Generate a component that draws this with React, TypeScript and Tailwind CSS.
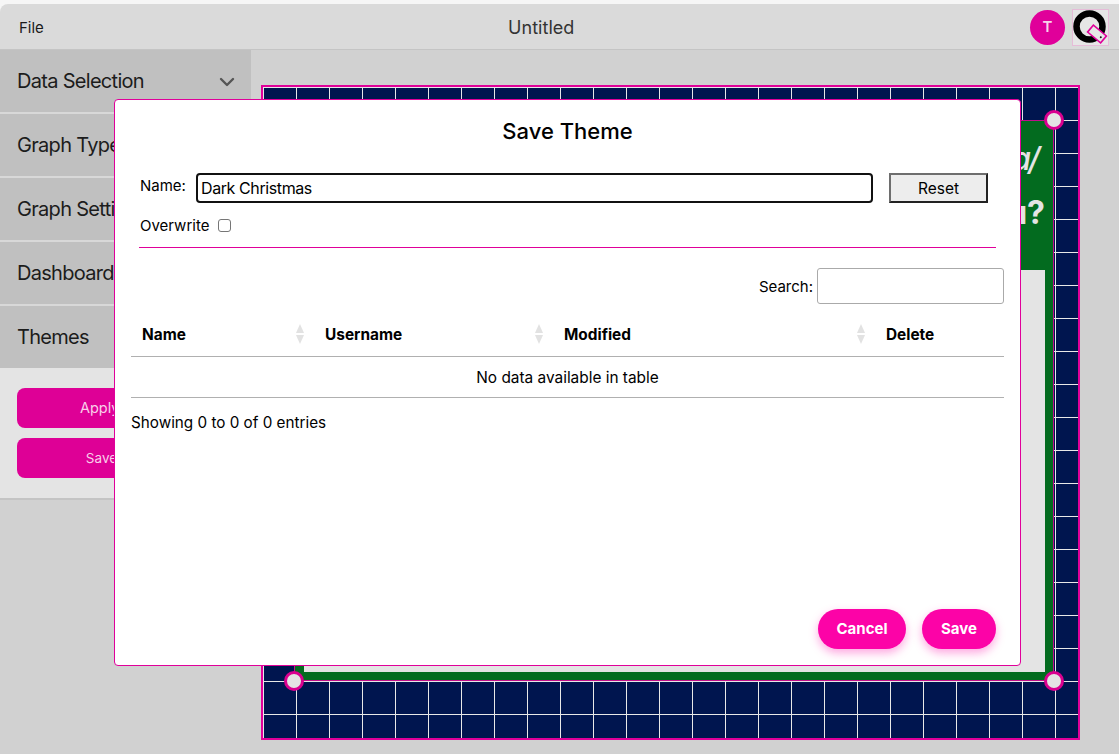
import React from "react";
import { ChevronDown } from "lucide-react";

const sections = ["Data Selection", "Graph Type", "Graph Settings", "Dashboard", "Themes"];

const SortIcon = () => (
  <svg width="10" height="20" viewBox="0 0 10 20" className="shrink-0">
    <path d="M5 0L9 9H1Z" fill="#e2e2e2" />
    <path d="M5 20L1 11H9Z" fill="#e2e2e2" />
  </svg>
);

const Handle = ({ className }: { className: string }) => (
  <div className={`absolute w-[20px] h-[20px] rounded-full bg-[#e4e4e4] border-[3px] border-[#d9008f] ${className}`} />
);

const Logo = () => (
  <div className="w-[37px] h-[37px] bg-[#e6e6e6] border border-[#e6bcd8]">
    <svg width="35" height="35" viewBox="0 0 35 35">
      <circle cx="16.5" cy="16.5" r="13" fill="none" stroke="#000" strokeWidth="6.5" />
      <g transform="rotate(40 24 24)">
        <rect x="15.5" y="19.5" width="17" height="9" fill="#e6e6e6" stroke="#e0009a" strokeWidth="1.6" />
        <circle cx="29" cy="24" r="1" fill="#111" />
      </g>
    </svg>
  </div>
);

const Header = () => (
  <header className="relative h-[46px] flex items-center justify-between bg-[#dadada] border-b border-[#c4c4c4] rounded-tl-lg pl-[19px] pr-[10px] pt-[1px]">
    <span className="text-[15px] text-[#1a1a1a] mt-[2px]">File</span>
    <span className="absolute left-[508px] text-[18px] tracking-[0.05px] text-[#333]">Untitled</span>
    <div className="flex items-center gap-[7px]">
      <div className="w-[35px] h-[35px] rounded-full bg-[#e0009a] flex items-center justify-center text-[15px] font-semibold text-[#f6d5ea]">T</div>
      <Logo />
    </div>
  </header>
);

const Sidebar = () => (
  <aside className="w-[251px] shrink-0">
    <div className="flex flex-col gap-[2px] bg-[#d8d8d8]">
      {sections.map((s) => (
        <div key={s} className="h-[62px] bg-[#c0c0c0] flex items-center justify-between pl-[17px] pr-[12px] text-[20px] tracking-[-0.7px] text-[#1c1c1c]">
          <span>{s}</span>
          <ChevronDown size={24} strokeWidth={2.4} className="text-[#555] mt-[2px]" />
        </div>
      ))}
    </div>
    <div className="bg-[#e4e4e4] border-b-2 border-[#c4c4c4] h-[132px] px-[17px] pt-[20px] flex flex-col gap-[10px]">
      <button className="h-[40px] rounded-lg bg-[#de0096] text-[14.5px] text-[#f8cfe9]">Apply Theme</button>
      <button className="h-[40px] rounded-lg bg-[#de0096] text-[13.5px] text-[#f8cfe9]">Save Theme</button>
    </div>
  </aside>
);

const Canvas = () => (
  <div className="relative ml-[10px] mt-[35px] w-[819px] h-[655px] border-2 border-[#e0009a] bg-[#00154f] bg-[linear-gradient(to_right,#e8e8e8_1px,transparent_1px),linear-gradient(to_bottom,#e8e8e8_1px,transparent_1px)] bg-[size:33px_33px]">
    <div className="absolute left-[31px] top-[33px] w-[760px] h-[561px] border border-[#c0108a] bg-[#036b1f] flex flex-col pl-[9px] pr-[8px] pb-[8px]">
      <div className="h-[149px] shrink-0 flex flex-col items-end pt-[15px] text-[32px] leading-[46px] text-[#e4e4e4]">
        <span className="italic font-medium pr-[8px] tracking-[-3px]">a/</span>
        <span className="font-bold mt-[8px]">u?</span>
      </div>
      <div className="flex-1 bg-[#e4e4e4]" />
      <Handle className="-top-px -left-px -translate-x-1/2 -translate-y-1/2" />
      <Handle className="-top-px -right-px translate-x-1/2 -translate-y-1/2" />
      <Handle className="-bottom-px -left-px -translate-x-1/2 translate-y-1/2" />
      <Handle className="-bottom-px -right-px translate-x-1/2 translate-y-1/2" />
    </div>
  </div>
);

const SaveThemeModal = () => (
  <div className="absolute left-[114px] top-[99px] w-[907px] h-[567px] bg-white border border-[#e0009a] rounded-[4px] flex flex-col text-black">
    <h2 className="text-center text-[22px] font-medium leading-[28px] mt-[17px]">Save Theme</h2>
    <div className="ml-[24px] mr-[24px] mt-[28px]">
      <div className="flex items-center h-[30px]">
        <label className="text-[15px] w-[57px] -mt-[4px] pl-[1px]">Name:</label>
        <input readOnly value="Dark Christmas" className="w-[677px] h-[30px] border-2 border-[#111] rounded-[4px] px-[3px] text-[16px] tracking-[-0.4px] outline-none" />
        <button className="ml-[16px] w-[99px] h-[30px] pt-[1px] bg-[#ededed] border-2 border-t-[#6e6e6e] border-l-[#6e6e6e] border-r-[#222] border-b-[#222] text-[15.5px]">Reset</button>
      </div>
      <div className="flex items-center h-[22px] mt-[11px] text-[15px] pl-[1px]">
        <span className="mt-[2px]">Overwrite</span>
        <span className="ml-[9px] w-[13px] h-[13px] rounded-[3px] border border-[#767676] bg-white" />
      </div>
      <div className="h-px bg-[#e0009a] mt-[11px]" />
    </div>
    <div className="ml-[16px] mr-[16px] mt-[20px]">
      <div className="flex items-center justify-end text-[15px]">
        <span className="mr-[4px] mt-[2px]">Search:</span>
        <input readOnly className="w-[187px] h-[36px] border border-[#aaa] rounded-[3px] outline-none" />
      </div>
      <table className="w-[873px] table-fixed mt-[9px] text-[15.4px]">
        <thead>
          <tr className="border-b border-[#b0b0b0] h-[43px]">
            {[
              ["Name", "w-[183px]"],
              ["Username", "w-[239px]"],
              ["Modified", "w-[322px]"],
            ].map(([label, w]) => (
              <th key={label} className={`${w} pl-[11px] pr-[9px] text-left font-bold`}>
                <div className="flex items-center justify-between">
                  <span>{label}</span>
                  <SortIcon />
                </div>
              </th>
            ))}
            <th className="pl-[11px] text-left font-bold">Delete</th>
          </tr>
        </thead>
        <tbody>
          <tr className="border-b border-[#b0b0b0] h-[41px]">
            <td colSpan={4} className="text-center pt-[3px]">No data available in table</td>
          </tr>
        </tbody>
      </table>
      <div className="text-[15.25px] mt-[15px] leading-[20px]">Showing 0 to 0 of 0 entries</div>
    </div>
    <div className="mt-auto flex justify-end gap-[16px] pr-[24px] pb-[16px]">
      <button className="h-[40px] w-[88px] rounded-full bg-[#fc03a7] text-white text-[15px] font-bold shadow-[0_4px_10px_rgba(252,3,167,0.35)]">Cancel</button>
      <button className="h-[40px] w-[74px] rounded-full bg-[#fc03a7] text-white text-[15px] font-bold shadow-[0_4px_10px_rgba(252,3,167,0.35)]">Save</button>
    </div>
  </div>
);

export default function App() {
  return (
    <div className="relative w-[1119px] h-[754px] overflow-hidden bg-[#f6f6f6] pt-[4px] font-['Inter','Liberation_Sans',sans-serif]">
      <Header />
      <div className="flex h-[704px] bg-[#d1d1d1]">
        <Sidebar />
        <Canvas />
      </div>
      <SaveThemeModal />
    </div>
  );
}
